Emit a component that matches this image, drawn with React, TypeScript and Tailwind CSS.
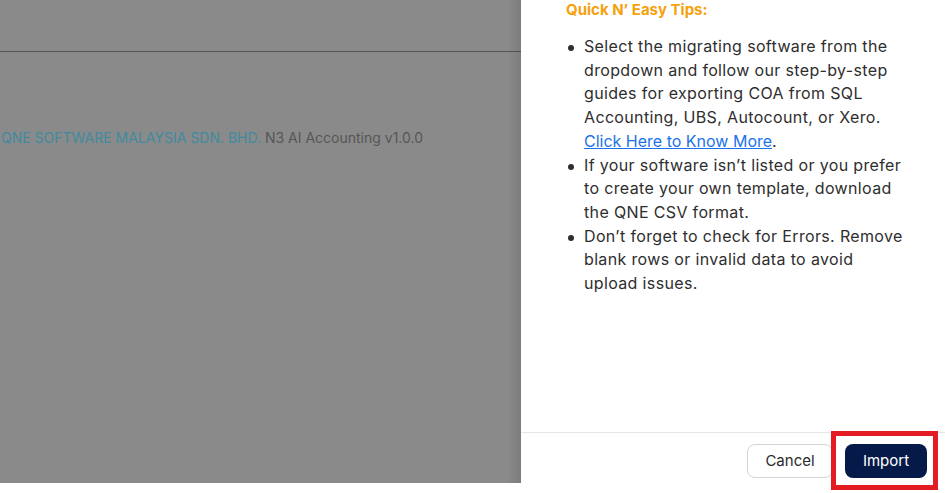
const tips: string[][] = [
  [
    'Select the migrating software from the',
    'dropdown and follow our step-by-step',
    'guides for exporting COA from SQL',
    'Accounting, UBS, Autocount, or Xero.',
  ],
  [
    'If your software isn\u2019t listed or you prefer',
    'to create your own template, download',
    'the QNE CSV format.',
  ],
  [
    'Don\u2019t forget to check for Errors. Remove',
    'blank rows or invalid data to avoid',
    'upload issues.',
  ],
];

export default function App() {
  return (
    <div
      className="relative flex w-[945px] h-[493px] overflow-hidden bg-white"
      style={{ fontFamily: 'Inter, "Open Sans", sans-serif' }}
    >
      {/* page behind the backdrop */}
      <div className="relative flex flex-col w-[521px] h-[483px] bg-[#8a8a8a] shrink-0">
        <div className="h-[52px] border-b border-[#555555]" />
        <div className="mt-[76px] pl-[1px] whitespace-nowrap text-[14px] leading-5 tracking-[0px]">
          <span className="text-[#3f8aa0]">QNE SOFTWARE MALAYSIA SDN. BHD.</span>{' '}
          <span className="text-[#565656]">N3 AI Accounting v1.0.0</span>
        </div>
        <div className="absolute right-0 top-0 h-full w-[14px] bg-gradient-to-r from-transparent to-black/10" />
      </div>

      {/* drawer */}
      <div className="flex flex-col w-[424px] h-full bg-white">
        <div className="flex-1 pl-[45px] pt-[1px]">
          <h3 className="text-[15px] leading-[18px] font-bold text-[#f5a10c]">
            Quick N&#8217; Easy Tips:
          </h3>
          <ul className="mt-[16px] flex flex-col text-[16px] leading-[23.7px] tracking-[0.35px] text-[#2e2e2e]">
            {tips.map((lines, i) => (
              <li key={i} className="flex">
                <span className="w-[18px] pt-[10px] pl-[2px]">
                  <span className="block w-[6px] h-[6px] rounded-full bg-[#2e2e2e]" />
                </span>
                <span className="whitespace-nowrap">
                  {lines.map((l, j) => (
                    <span key={j} className="block">
                      {l}
                    </span>
                  ))}
                  {i === 0 && (
                    <span className="block">
                      <a className="text-[#1a73e8] underline tracking-[0px]" href="#">
                        Click Here to Know More
                      </a>
                      .
                    </span>
                  )}
                </span>
              </li>
            ))}
          </ul>
        </div>
        <div className="flex justify-end gap-3 border-t border-[#e6e6e6] pt-[11px] pb-[15px] pr-[18px]">
          <button className="h-[34px] w-[86px] rounded-lg border border-[#d4d4d4] bg-white text-[15px] text-[#2b2b2b]">
            Cancel
          </button>
          <button className="h-[34px] w-[82px] rounded-lg bg-[#061a4a] text-[15px] text-white">
            Import
          </button>
        </div>
      </div>

      {/* annotation */}
      <div className="absolute left-[831px] top-[431px] w-[107px] h-[59px] border-[5px] border-[#e31b23]" />
    </div>
  );
}
